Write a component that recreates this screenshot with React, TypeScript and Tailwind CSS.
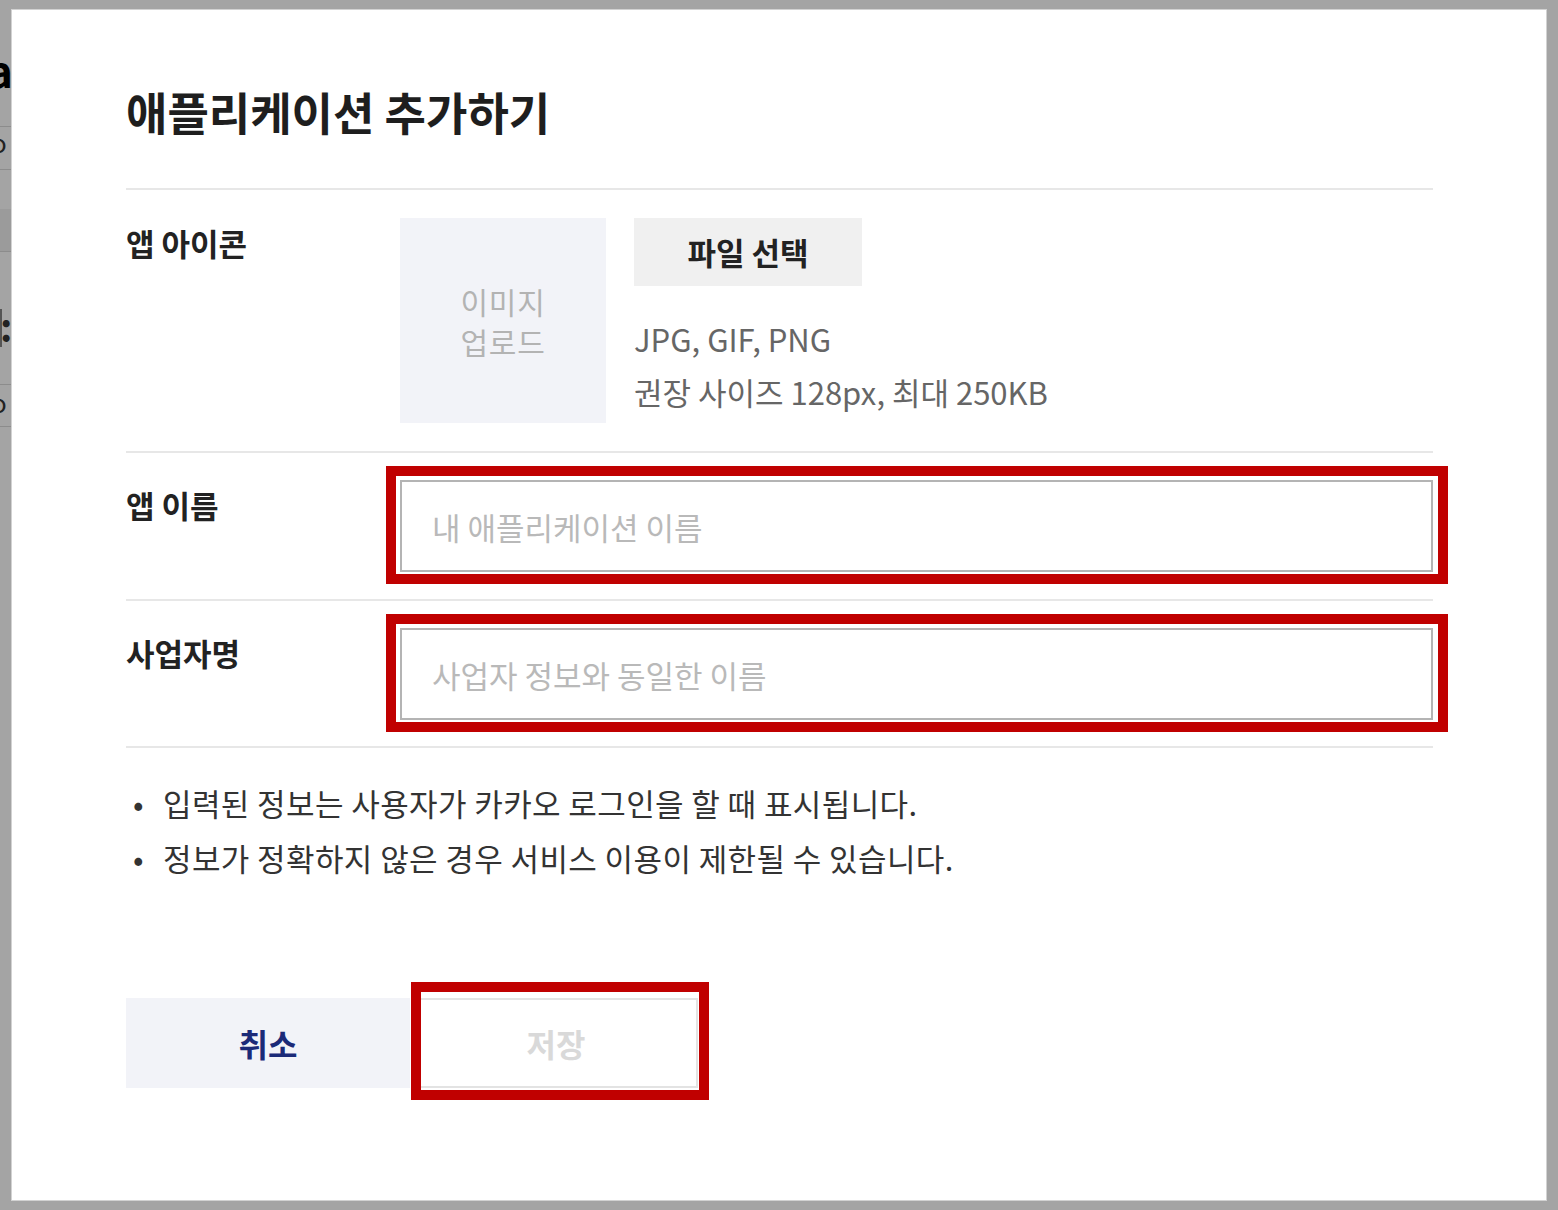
const font = { fontFamily: '"Noto Sans CJK KR", "Noto Sans", sans-serif' };

function Divider() {
  return <div className="h-[2px] w-full bg-[#e7e7e7]" />;
}

function Annotated({ children, box }: { children: React.ReactNode; box: string }) {
  return (
    <div className="relative">
      {children}
      <div className={`pointer-events-none absolute border-[10px] border-[#c00000] ${box}`} />
    </div>
  );
}

function TextField({ placeholder }: { placeholder: string }) {
  return (
    <Annotated box="-left-[14px] -right-[15px] -top-[14px] -bottom-[12px]">
      <input
        placeholder={placeholder}
        className="block h-[92px] w-full border-2 border-[#b4b4b4] bg-white px-[30px] text-[31px] text-[#333] outline-none placeholder:text-[#b9b9b9]"
        style={font}
      />
    </Annotated>
  );
}

const labelClass = 'w-[274px] shrink-0 text-[31px] font-bold leading-[50px] text-[#222]';

function BackdropStrip() {
  // page behind the dialog, only a sliver of it shows at the left edge
  return (
    <div className="w-[11px] shrink-0 overflow-hidden">
      <div className="relative h-full w-[11px]">
        <span className="absolute -left-[12px] top-[36px] text-[42px] font-bold leading-[50px] text-black">a</span>
        <div className="absolute left-0 top-[117px] h-px w-full bg-[#8c8c8c]" />
        <span className="absolute -left-[9px] top-[118px] text-[26px] leading-[30px] text-[#222]">o</span>
        <div className="absolute left-0 top-[160px] h-px w-full bg-[#8c8c8c]" />
        <div className="absolute left-0 top-[200px] h-[42px] w-full bg-[#9b9b9b]" />
        <div className="absolute left-0 top-[242px] h-px w-full bg-[#8c8c8c]" />
        <span className="absolute left-[0px] top-[294px] text-[38px] font-bold leading-[46px] text-[#222]">:</span>
        <div className="absolute -left-[2px] top-[300px] h-[38px] w-[4px] bg-[#555]" />
        <div className="absolute left-0 top-[375px] h-px w-full bg-[#8c8c8c]" />
        <span className="absolute -left-[9px] top-[378px] text-[26px] leading-[30px] text-[#222]">o</span>
        <div className="absolute left-0 top-[417px] h-px w-full bg-[#8c8c8c]" />
      </div>
    </div>
  );
}

export default function App() {
  return (
    <div className="flex h-[1210px] w-[1558px] bg-[#a4a4a4] py-[9px]" style={font}>
      <BackdropStrip />
      <div className="h-[1192px] w-[1536px] border border-[#d2d2d2] bg-white pl-[114px] pr-[113px]">
        <h1 className="pt-[72px] text-[45px] font-bold leading-[60px] text-[#1e1e1e]">애플리케이션 추가하기</h1>
        <div className="mt-[46px]">
          <Divider />
        </div>

        {/* 앱 아이콘 */}
        <div className="flex pb-[28px] pt-[28px]">
          <div className={labelClass}>앱 아이콘</div>
          <div className="flex gap-[28px]">
            <div className="flex h-[205px] w-[206px] flex-col items-center justify-center bg-[#f2f3f8] text-center text-[30px] leading-[40px] tracking-[0.8px] text-[#b3b3b3]">
              <span>이미지</span>
              <span>업로드</span>
            </div>
            <div>
              <button
                type="button"
                className="h-[68px] w-[228px] bg-[#f0f0f0] text-[31px] font-bold text-[#222]"
                style={font}
              >
                파일 선택
              </button>
              <div className="mt-[26px] text-[31px] leading-[53px] text-[#666]">
                <p>JPG, GIF, PNG</p>
                <p>권장 사이즈 128px, 최대 250KB</p>
              </div>
            </div>
          </div>
        </div>
        <Divider />

        {/* 앱 이름 */}
        <div className="flex pb-[27px] pt-[27px]">
          <div className={labelClass}>앱 이름</div>
          <div className="flex-1">
            <TextField placeholder="내 애플리케이션 이름" />
          </div>
        </div>
        <Divider />

        {/* 사업자명 */}
        <div className="flex pb-[26px] pt-[27px]">
          <div className={labelClass}>사업자명</div>
          <div className="flex-1">
            <TextField placeholder="사업자 정보와 동일한 이름" />
          </div>
        </div>
        <Divider />

        <ul className="mt-[27px] text-[31px] leading-[55px] tracking-[0.4px] text-[#333]">
          <li className="flex">
            <span className="w-[37px] pl-[7px]">•</span>
            입력된 정보는 사용자가 카카오 로그인을 할 때 표시됩니다.
          </li>
          <li className="flex">
            <span className="w-[37px] pl-[7px]">•</span>
            정보가 정확하지 않은 경우 서비스 이용이 제한될 수 있습니다.
          </li>
        </ul>

        <div className="mt-[113px] flex gap-[4px]">
          <button
            type="button"
            className="h-[90px] w-[284px] bg-[#f2f3f8] text-[32px] font-bold text-[#1b2a78]"
            style={font}
          >
            취소
          </button>
          <Annotated box="-left-[3px] -right-[11px] -top-[16px] -bottom-[12px]">
            <button
              type="button"
              disabled
              className="h-[90px] w-[284px] border-2 border-[#e3e3e3] bg-white text-[32px] font-bold text-[#d9d9d9]"
              style={font}
            >
              저장
            </button>
          </Annotated>
        </div>
      </div>
    </div>
  );
}
